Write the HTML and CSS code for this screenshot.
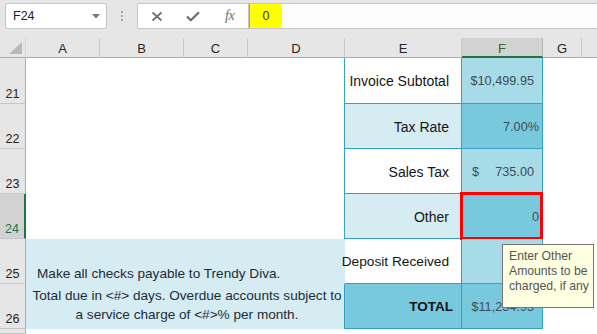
FILE: index.html
```html
<!DOCTYPE html>
<html>
<head>
<meta charset="utf-8">
<link rel="stylesheet" href="styles.css">
</head>
<body>
<div class="app">
  <div class="fbar">
    <div class="namebox">
      <span class="ref">F24</span>
      <svg class="arrow" width="8" height="5" viewBox="0 0 8 5"><path d="M0 0H8L4 4.5Z" fill="#7a7a7a"/></svg>
    </div>
    <div class="grip"><i></i><i></i><i></i></div>
    <div class="btns">
      <svg class="ico" width="12" height="11" viewBox="0 0 12 11"><path d="M1.5 1.5L10.5 9.5M10.5 1.5L1.5 9.5" stroke="#6e6e6e" stroke-width="1.7" fill="none"/></svg>
      <svg class="ico" width="14" height="11" viewBox="0 0 14 11"><path d="M1 5.5L4.8 9.3L13 1.3" stroke="#6e6e6e" stroke-width="2.2" fill="none"/></svg>
      <span class="fx">fx</span>
    </div>
    <div class="input"><span class="hl">0</span></div>
  </div>

  <div class="sheet">
    <div class="ch corner"><svg width="13" height="12" viewBox="0 0 13 12"><path d="M13 0V12H0Z" fill="#b9b9b9"/></svg></div>
    <div class="ch">A</div>
    <div class="ch">B</div>
    <div class="ch">C</div>
    <div class="ch">D</div>
    <div class="ch">E</div>
    <div class="ch ch-sel">F</div>
    <div class="ch">G</div>
    <div class="ch ch-rest"></div>

    <div class="rh r1">21</div>
    <div class="blank-ad"></div>
    <div class="lab white">Invoice Subtotal</div>
    <div class="val mid acc"><span>$10,499.95</span></div>
    <div class="blank-g"></div>

    <div class="rh r2">22</div>
    <div class="lab light">Tax Rate</div>
    <div class="val dark pct"><span>7.00%</span></div>

    <div class="rh r3">23</div>
    <div class="lab white">Sales Tax</div>
    <div class="val mid acc split"><span>$</span><span>735.00</span></div>

    <div class="rh rh-sel r4">24</div>
    <div class="lab light">Other</div>
    <div class="val dark pct active"><span>0</span><i class="caret"></i><b class="redbox"></b></div>

    <div class="rh r5">25</div>
    <div class="note">
      <div class="note-a">Make all checks payable to Trendy Diva.</div>
      <div class="note-b"><span>Total due in &lt;#&gt; days. Overdue accounts subject to</span><span>a service charge of &lt;#&gt;% per month.</span></div>
    </div>
    <div class="lab white noleft">Deposit Received</div>
    <div class="val mid"></div>

    <div class="rh r6">26</div>
    <div class="lab dark bold">TOTAL</div>
    <div class="val dark acc"><span>$11,234.95</span></div>

    <div class="rh r7"></div>
    <div class="blank-last"></div>
  </div>

  <div class="tip">
    <span>Enter Other</span>
    <span>Amounts to be</span>
    <span>charged, if any</span>
  </div>
</div>
</body>
</html>
```

FILE: styles.css
```css
html, body {
  margin: 0;
  padding: 0;
  width: 597px;
  height: 334px;
  overflow: hidden;
  background: #e6e6e6;
  font-family: "Liberation Sans", Arial, sans-serif;
}

.app {
  position: relative;
  width: 597px;
  height: 334px;
  overflow: hidden;
}

/* formula bar */
.fbar {
  height: 38px;
  display: flex;
  align-items: flex-start;
  padding-top: 3px;
  box-sizing: border-box;
  background: #e6e6e6;
}

.namebox {
  margin-left: 5px;
  width: 102px;
  height: 26px;
  box-sizing: border-box;
  border: 1px solid #c6c6c6;
  background: #fff;
  display: flex;
  align-items: center;
  justify-content: space-between;
  padding: 0 6px 0 7px;
}

.ref {
  font-size: 12.5px;
  color: #222;
}

.arrow {
  margin-top: 1px;
}

.grip {
  width: 30px;
  height: 26px;
  display: flex;
  flex-direction: column;
  align-items: center;
  justify-content: center;
  gap: 2px;
}

.grip i {
  display: block;
  width: 2px;
  height: 2px;
  background: #a8a8a8;
}

.btns {
  width: 112px;
  height: 26px;
  box-sizing: border-box;
  border: 1px solid #c6c6c6;
  background: #fff;
  display: flex;
  align-items: center;
  padding-left: 13px;
  gap: 23px;
}

.fx {
  font-family: "Liberation Serif", "Times New Roman", serif;
  font-style: italic;
  font-size: 14px;
  color: #6e6e6e;
  margin-left: 2px;
  letter-spacing: -0.5px;
}

.input {
  flex: 1;
  height: 26px;
  margin-right: -4px;
  box-sizing: border-box;
  border: 1px solid #c6c6c6;
  border-left-color: #a7a76a;
  background: #fdfdfd;
  display: flex;
}

.hl {
  width: 32px;
  background: #ffff00;
  font-size: 12.5px;
  color: #333;
  display: flex;
  align-items: center;
  justify-content: center;
}

/* sheet */
.sheet {
  display: grid;
  grid-template-columns: 26px 74px 84px 64px 97px 117px 81px 39px 1fr;
  grid-template-rows: 20px 46px 45px 45px 45px 45px 45px 1fr;
  height: 296px;
  background: #fff;
}

.ch {
  background: #e6e6e6;
  border-right: 1px solid #c8c8c8;
  border-bottom: 1px solid #ababab;
  font-size: 13px;
  color: #262626;
  display: flex;
  align-items: center;
  justify-content: center;
  padding-top: 2px;
  box-sizing: border-box;
}

.corner {
  justify-content: flex-end;
  align-items: flex-end;
  padding: 0 3px 3px 0;
  border-right-color: #d6d6d6;
}

.ch-sel {
  background: #d2d2d2;
  color: #3c5f33;
  border-bottom: 2px solid #217346;
  border-right-color: #b5b5b5;
}

.ch-rest {
  border-right: none;
}

.rh {
  grid-column: 1;
  background: #e6e6e6;
  border-right: 1px solid #ababab;
  border-bottom: 1px solid #c6c6c6;
  font-size: 12.5px;
  color: #222;
  display: flex;
  align-items: flex-end;
  justify-content: center;
  padding-bottom: 2px;
  box-sizing: border-box;
}

.r1 { grid-row: 2; }
.r2 { grid-row: 3; }
.r3 { grid-row: 4; }
.r4 { grid-row: 5; }
.r5 { grid-row: 6; }
.r6 { grid-row: 7; }
.r7 { grid-row: 8; }

.rh-sel {
  background: #d2d2d2;
  color: #217346;
  border-right: 2px solid #217346;
}

.blank-ad {
  grid-column: 2 / 6;
  grid-row: 2 / 6;
  background: #fff;
}

.blank-g {
  grid-column: 8 / 10;
  grid-row: 2 / 8;
  background: #fff;
}

.blank-last {
  grid-column: 2 / 10;
  grid-row: 8;
  background: #fff;
}

/* table */
.lab {
  grid-column: 6;
  box-sizing: border-box;
  border-right: 1px solid #35a2c2;
  border-bottom: 1px solid #35a2c2;
  box-shadow: -1px 0 0 #35a2c2;
  display: flex;
  align-items: center;
  justify-content: flex-end;
  padding-right: 12px;
  font-size: 14px;
  color: #151515;
  white-space: nowrap;
  padding-top: 1px;
}

.lab.noleft {
  box-shadow: none;
  font-size: 13.7px;
}

.lab.bold {
  font-weight: bold;
  padding-right: 8px;
  font-size: 13.5px;
}

.val {
  grid-column: 7;
  position: relative;
  box-sizing: border-box;
  border-right: 1px solid #35a2c2;
  border-bottom: 1px solid #35a2c2;
  display: flex;
  align-items: center;
  justify-content: flex-end;
  font-size: 12.7px;
  color: #404b52;
  white-space: nowrap;
  padding-top: 1px;
}

.val.acc {
  padding-right: 8px;
}

.val.pct {
  padding-right: 3px;
}

.val.split {
  justify-content: space-between;
  padding-left: 10px;
}

.white { background: #ffffff; }
.light { background: #d5ecf3; }
.mid { background: #a7dbe8; }
.dark { background: #78c9de; }

.caret {
  display: block;
  width: 1px;
  height: 17px;
  background: #7a2a10;
  margin-left: 1px;
  margin-right: -2px;
}

.redbox {
  position: absolute;
  left: -2px;
  top: -2px;
  right: -1px;
  bottom: -2px;
  border: 3px solid #ff0000;
}

/* note */
.note {
  grid-column: 2 / 6;
  grid-row: 6 / 8;
  background: #d5ecf3;
  display: grid;
  grid-template-rows: 45px 45px;
  color: #1e2b33;
  font-size: 13.6px;
  white-space: nowrap;
}

.note-a {
  display: flex;
  align-items: flex-end;
  padding-left: 11px;
  padding-bottom: 2px;
  line-height: 17px;
}

.note-b {
  display: flex;
  flex-direction: column;
  justify-content: flex-end;
  align-items: center;
  padding-bottom: 5px;
  line-height: 19px;
  padding-left: 3px;
}

/* tooltip */
.tip {
  position: absolute;
  left: 502px;
  top: 244px;
  width: 92px;
  height: 64px;
  box-sizing: border-box;
  border: 1px solid #767676;
  background: #ffffe1;
  padding: 4px 0 0 6px;
  display: flex;
  flex-direction: column;
  font-size: 12.2px;
  line-height: 15px;
  color: #555;
  white-space: nowrap;
}
```
